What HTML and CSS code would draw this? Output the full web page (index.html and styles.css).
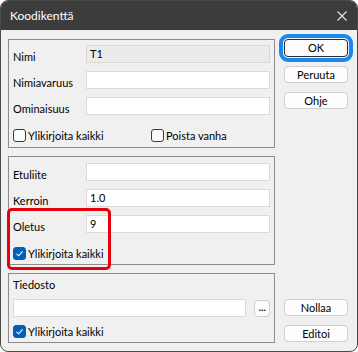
FILE: index.html
```html
<!doctype html>
<html lang="fi">
<head>
  <meta charset="utf-8">
  <title>Koodikenttä</title>
  <link rel="stylesheet" href="styles.css">
</head>
<body>
<div class="window">
  <div class="titlebar">
    <span class="title">Koodikenttä</span>
    <svg class="close" width="10" height="10" viewBox="0 0 10 10">
      <path d="M0.5 0.5 L9.5 9.5 M9.5 0.5 L0.5 9.5" stroke="#e6e6e6" stroke-width="1.1" fill="none"/>
    </svg>
  </div>
  <div class="content">
    <div class="groups">
      <div class="group g1">
        <div class="row"><span class="label">Nimi</span><div class="field disabled">T1</div></div>
        <div class="row"><span class="label">Nimiavaruus</span><div class="field"></div></div>
        <div class="row"><span class="label">Ominaisuus</span><div class="field"></div></div>
        <div class="checks">
          <label class="check wide"><span class="box"></span>Ylikirjoita kaikki</label>
          <label class="check"><span class="box"></span>Poista vanha</label>
        </div>
      </div>
      <div class="group g2">
        <div class="row"><span class="label">Etuliite</span><div class="field"></div></div>
        <div class="row"><span class="label">Kerroin</span><div class="field">1.0</div></div>
        <div class="row"><span class="label">Oletus</span><div class="field">9</div></div>
        <div class="checks">
          <label class="check"><span class="box on"><svg width="11" height="11" viewBox="0 0 11 11"><path d="M2.5 5.8 L4.6 7.8 L8.6 3.4" stroke="#fff" stroke-width="1.1" fill="none"/></svg></span>Ylikirjoita kaikki</label>
        </div>
      </div>
      <div class="group g3">
        <div class="flabel">Tiedosto</div>
        <div class="filerow">
          <div class="field"></div>
          <div class="btn dots">...</div>
        </div>
        <div class="checks">
          <label class="check"><span class="box on"><svg width="11" height="11" viewBox="0 0 11 11"><path d="M2.5 5.8 L4.6 7.8 L8.6 3.4" stroke="#fff" stroke-width="1.1" fill="none"/></svg></span>Ylikirjoita kaikki</label>
        </div>
      </div>
    </div>
    <div class="side">
      <div class="btngroup">
        <div class="btn default">OK</div>
        <div class="btn">Peruuta</div>
        <div class="btn">Ohje</div>
      </div>
      <div class="btngroup">
        <div class="btn">Nollaa</div>
        <div class="btn">Editoi</div>
      </div>
    </div>
  </div>
  <div class="highlight"></div>
</div>
</body>
</html>
```

FILE: styles.css
```css
/* Page */
html, body {
  margin: 0;
  background: #fff;
}
body {
  font-family: Lato, "Liberation Sans", sans-serif;
  font-size: 11px;
  color: #000;
}

/* Dialog window */
.window {
  position: relative;
  width: 358px;
  height: 352px;
  box-sizing: border-box;
  border: 1px solid #4a4a4a;
  border-radius: 8px;
  background: #f0f0f0;
  overflow: hidden;
}
.titlebar {
  height: 29px;
  background: #3c3c3c;
  color: #fff;
  font-size: 12px;
  display: flex;
  align-items: center;
  justify-content: space-between;
  padding: 0 10px 0 9px;
}
.content {
  display: flex;
  gap: 9px;
  padding: 9px 9px 0 7px;
}

/* Group boxes */
.groups {
  width: 267px;
  display: flex;
  flex-direction: column;
  gap: 8px;
}
.group {
  box-sizing: border-box;
  border: 1px solid #8c8c8c;
  padding: 5px 4px 0 4px;
}
.g1 { height: 109px; }
.g2 { height: 109px; padding-top: 6px; }
.g3 { height: 70px; padding-top: 1px; }

.row {
  display: flex;
  height: 18px;
}
.row + .row {
  margin-top: 8px;
}
.label {
  width: 73px;
  margin-top: 3px;
  line-height: 18px;
}
.field {
  flex: 1;
  height: 18px;
  box-sizing: border-box;
  border: 1px solid #dadada;
  background: #fff;
  padding: 0 3px;
  line-height: 16px;
}
.field.disabled {
  background: #ebebeb;
  border-color: #d8d8d8;
}

/* Checkboxes */
.checks {
  display: flex;
  align-items: center;
  height: 13px;
  margin-top: 14px;
}
.check {
  display: flex;
  align-items: center;
  gap: 2px;
  line-height: 13px;
}
.check.wide {
  width: 138px;
}
.box {
  width: 13px;
  height: 13px;
  box-sizing: border-box;
  border: 1px solid #3a3a3a;
  border-radius: 3px;
  background: #fbfbfb;
  display: flex;
  align-items: center;
  justify-content: center;
}
.box.on {
  background: #005fb8;
  border-color: #005fb8;
}

/* File row */
.flabel {
  line-height: 18px;
  margin-top: 1px;
}
.filerow {
  display: flex;
  gap: 8px;
  margin-top: 5px;
}
.g3 .checks {
  margin-top: 8px;
}

/* Buttons */
.side {
  width: 64px;
  height: 303px;
  display: flex;
  flex-direction: column;
  justify-content: space-between;
}
.btngroup {
  display: flex;
  flex-direction: column;
  gap: 9px;
}
.btn {
  height: 17px;
  box-sizing: border-box;
  border: 1px solid #cfcfcf;
  border-radius: 4px;
  background: #fdfdfd;
  text-align: center;
  line-height: 15px;
}
.btn.default {
  height: 18px;
  border-color: #2b2b2b;
  outline: 4px solid #1b88ef;
  outline-offset: 1px;
  line-height: 16px;
}
.btn.dots {
  width: 16px;
  margin-top: 1px;
  line-height: 11px;
  font-size: 12px;
  letter-spacing: -0.5px;
}

/* Annotation overlay */
.highlight {
  position: absolute;
  left: 6px;
  top: 207px;
  width: 104px;
  height: 62px;
  box-sizing: border-box;
  border: 3px solid #e5000d;
  border-radius: 5px;
}
```
